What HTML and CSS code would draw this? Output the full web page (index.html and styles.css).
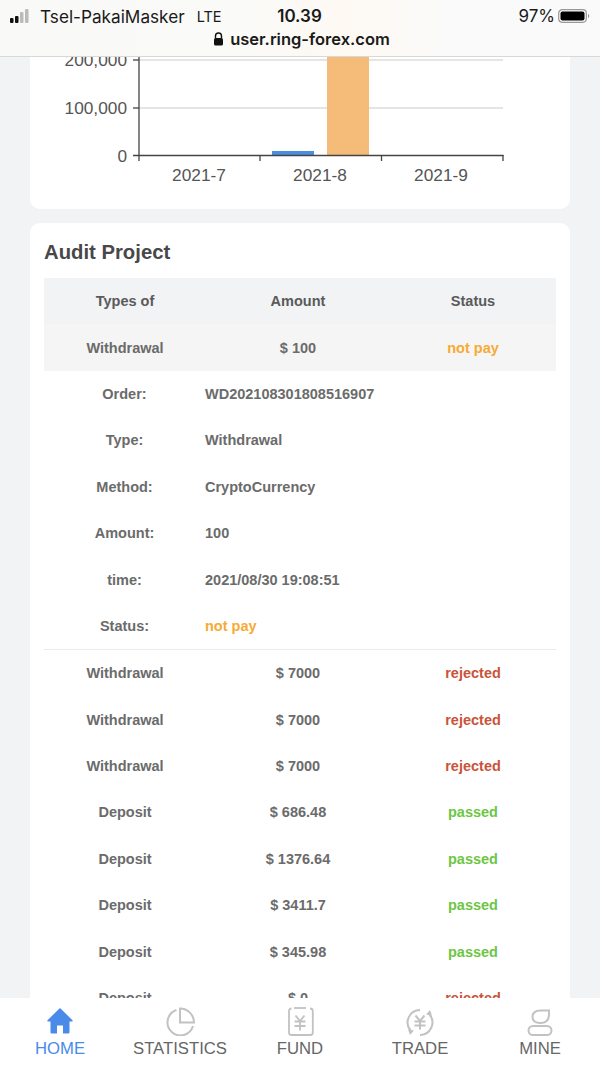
FILE: index.html
```html
<!DOCTYPE html>
<html lang="en">
<head>
<meta charset="utf-8">
<title>Audit Project</title>
<link rel="stylesheet" href="styles.css">
</head>
<body>
<div class="app">
  <header class="browser">
    <div class="status">
      <div class="carrier">
        <svg class="signal" width="24" height="16" viewBox="0 0 24 16"><rect x="1" y="10" width="3.5" height="5" rx="1" fill="#111"/><rect x="6" y="8" width="3.5" height="7" rx="1" fill="#111"/><rect x="11" y="4" width="3.5" height="11" rx="1" fill="#bbb"/><rect x="16" y="1" width="3.5" height="14" rx="1" fill="#bbb"/></svg>
        <span class="carrier-name">Tsel-PakaiMasker</span>
        <span class="net">LTE</span>
      </div>
      <div class="clock">10.39</div>
      <div class="battery">
        <span>97%</span>
        <svg width="32" height="16" viewBox="0 0 32 16"><rect x="0.7" y="1.7" width="27.6" height="12.6" rx="3.5" fill="none" stroke="#999" stroke-width="1.2"/><rect x="2.5" y="3.5" width="24" height="9" rx="2" fill="#000"/><path d="M30 6v4c.8-.3 1.2-1 1.2-2s-.4-1.700-1.200-2z" fill="#999"/></svg>
      </div>
    </div>
    <div class="url">
      <svg width="11" height="14" viewBox="0 0 11 14"><path d="M2.500 6V4a3 3 0 0 1 6 0v2" fill="none" stroke="#111" stroke-width="1.400"/><rect x="1" y="6" width="9" height="7.500" rx="1.500" fill="#111"/></svg>
      <span>user.ring-forex.com</span>
    </div>
  </header>

  <main class="content">
    <section class="card chart-card">
      <svg class="chart" width="540" height="129" viewBox="30 57 540 129">
        <g class="grid"><line x1="139" y1="60" x2="503" y2="60"/><line x1="139" y1="108" x2="503" y2="108"/></g>
        <rect x="272" y="151" width="42" height="4.500" fill="#4a90e2"/>
        <rect x="327" y="50" width="42" height="105.500" fill="#f5bb78"/>
        <g class="axis">
          <line x1="139" y1="50" x2="139" y2="161"/>
          <line x1="133" y1="155.500" x2="503.500" y2="155.500"/>
          <line x1="133" y1="108" x2="139" y2="108"/>
          <line x1="133" y1="60" x2="139" y2="60"/>
          <line x1="260" y1="155" x2="260" y2="161"/>
          <line x1="381.500" y1="155" x2="381.500" y2="161"/>
          <line x1="503" y1="155" x2="503" y2="161"/>
        </g>
        <g class="ylabels">
          <text x="127" y="66">200,000</text>
          <text x="127" y="114">100,000</text>
          <text x="127" y="161.500">0</text>
        </g>
        <g class="xlabels">
          <text x="199" y="181">2021-7</text>
          <text x="320" y="181">2021-8</text>
          <text x="441" y="181">2021-9</text>
        </g>
      </svg>
    </section>

    <section class="card audit">
      <h2 class="title">Audit Project</h2>
      <div class="table">
        <div class="row head"><span>Types of</span><span>Amount</span><span>Status</span></div>
        <div class="row open"><span>Withdrawal</span><span>$ 100</span><span class="s-wait">not pay</span></div>
        <div class="details">
          <div class="detail"><span>Order:</span><span>WD202108301808516907</span></div>
          <div class="detail"><span>Type:</span><span>Withdrawal</span></div>
          <div class="detail"><span>Method:</span><span>CryptoCurrency</span></div>
          <div class="detail"><span>Amount:</span><span>100</span></div>
          <div class="detail"><span>time:</span><span>2021/08/30 19:08:51</span></div>
          <div class="detail"><span>Status:</span><span class="s-wait">not pay</span></div>
        </div>
        <div class="row"><span>Withdrawal</span><span>$ 7000</span><span class="s-bad">rejected</span></div>
        <div class="row"><span>Withdrawal</span><span>$ 7000</span><span class="s-bad">rejected</span></div>
        <div class="row"><span>Withdrawal</span><span>$ 7000</span><span class="s-bad">rejected</span></div>
        <div class="row"><span>Deposit</span><span>$ 686.48</span><span class="s-ok">passed</span></div>
        <div class="row"><span>Deposit</span><span>$ 1376.64</span><span class="s-ok">passed</span></div>
        <div class="row"><span>Deposit</span><span>$ 3411.7</span><span class="s-ok">passed</span></div>
        <div class="row"><span>Deposit</span><span>$ 345.98</span><span class="s-ok">passed</span></div>
        <div class="row"><span>Deposit</span><span>$ 0</span><span class="s-bad">rejected</span></div>
      </div>
    </section>
  </main>

  <nav class="tabs">
    <a class="tab active">
      <svg width="30" height="30" viewBox="0 0 30 30"><path d="M15 2 2.500 14.200c-.6.600-.2 1.300.6 1.300H5.500v10.500c0 1 .7 1.500 1.500 1.500h5v-8h6v8h5c.8 0 1.500-.5 1.500-1.500V15.500h2.400c.8 0 1.200-.7.600-1.300z" fill="#4a8bea"/></svg>
      <span>HOME</span>
    </a>
    <a class="tab">
      <svg width="30" height="30" viewBox="0 0 30 30" fill="none" stroke="#c2c2c2" stroke-width="2"><path d="M11.500 4A13 13 0 1 0 28 20"/><path d="M15 2.500V16.500H29A14 14 0 0 0 15 2.500z"/></svg>
      <span>STATISTICS</span>
    </a>
    <a class="tab">
      <svg width="30" height="30" viewBox="0 0 30 30" fill="none" stroke="#c2c2c2" stroke-width="1.800"><path d="M9 2H21"/><path d="M25 2.500c1.800 0 2.800 1 2.800 2.500V26.500c0 1.500-1 2.500-2.500 2.500H6.500C5 29 4 28 4 26.500V5c0-1.500 1-2.500 2.500-2.500"/><path d="M10.500 9.500 15 15l4.500-5.500M9.500 15.500h11M9.500 20h11M15 15v9.500"/></svg>
      <span>FUND</span>
    </a>
    <a class="tab">
      <svg width="30" height="30" viewBox="0 0 30 30" fill="none" stroke="#c2c2c2" stroke-width="2"><path d="M15 4A12.500 12.500 0 0 0 5.500 24.500"/><path d="M24.500 8.500A12.500 12.500 0 0 1 15 29"/><path d="M10.500 9.500 15 15l4.500-5.500M9.500 15.500h11M9.500 19.500h11M15 15v8.500"/><path d="M3 23.500 9 24.500 5 29zM27 9.500 21 8.500 25 4z" fill="#c2c2c2" stroke="none"/></svg>
      <span>TRADE</span>
    </a>
    <a class="tab">
      <svg width="30" height="30" viewBox="0 0 30 30" fill="none" stroke="#c2c2c2" stroke-width="2"><path d="M15.500 4.500H24V8Q24 17 15.500 17Q7.500 17 7.500 11Q7.500 4.500 15.500 4.500z"/><rect x="3.500" y="20" width="23" height="9" rx="4.500"/></svg>
      <span>MINE</span>
    </a>
  </nav>
</div>
</body>
</html>
```

FILE: styles.css
```css
* { box-sizing: border-box; }
html, body { margin: 0; padding: 0; }
body { background: #f2f3f5; font-family: "Liberation Sans", Arial, sans-serif; color: #666; }
.app { width: 600px; height: 1067px; display: flex; flex-direction: column; overflow: hidden; }

.browser { height: 57px; flex: none; background: linear-gradient(90deg, #f9f9f8 0%, #fafaf8 40%, #fef9f3 58%, #fafafa 75%, #fafafa 100%); border-bottom: 1px solid #d8d8d8; font-family: Inter, "Liberation Sans", sans-serif; color: #1a1a1a; }
.status { height: 30px; padding: 2px 10px 0 9px; display: grid; grid-template-columns: 1fr auto 1fr; align-items: center; font-size: 17.200px; }
.carrier { display: flex; align-items: center; }
.carrier-name { margin-left: 7px; }
.net { margin-left: 12px; font-size: 14.500px; }
.signal { display: block; }
.clock { font-weight: 600; font-size: 17px; }
.battery { display: flex; justify-content: flex-end; align-items: center; gap: 3px; font-size: 17px; }
.battery svg { display: block; }
.url { display: flex; justify-content: center; align-items: center; gap: 6px; font-size: 16.500px; font-weight: 600; margin-top: -1px; padding-left: 3px; }
.url svg { display: block; }

.content { flex: 1; min-height: 0; overflow: hidden; padding: 0 30px; }
.card { background: #fff; border-radius: 10px; }
.chart-card { height: 152px; border-radius: 0 0 10px 10px; }
.chart { display: block; overflow: hidden; }
.grid line { stroke: #dcdcdc; stroke-width: 1.500; }
.axis line { stroke: #444; stroke-width: 1.300; }
.ylabels text, .xlabels text { font-family: "Liberation Sans", Arial, sans-serif; font-size: 17.300px; fill: #555; }
.ylabels text { text-anchor: end; }
.xlabels text { text-anchor: middle; }

.audit { margin-top: 14px; padding: 18px 14px 0; }
.title { margin: 0; font-size: 20.300px; line-height: 23px; font-weight: 700; color: #484848; }
.table { margin-top: 14px; font-size: 14.500px; line-height: 16px; font-weight: 700; color: #6b6b6b; }
.row { display: grid; grid-template-columns: 162px 184px 166px; height: 46.400px; align-items: center; text-align: center; }
.head { background: #f2f3f5; color: #5a5a5a; }
.open { background: #f5f5f5; }
.details { border-bottom: 1.500px solid #ececec; }
.detail { display: grid; grid-template-columns: 161px 1fr; height: 46.400px; align-items: center; }
.detail span:first-child { text-align: center; }
.s-wait { color: #f5ab35; }
.s-bad { color: #c9543a; }
.s-ok { color: #6cc644; }

.tabs { height: 69px; flex: none; background: #fff; display: grid; grid-template-columns: repeat(5, 120px); }
.tab { display: flex; flex-direction: column; align-items: center; padding-top: 8px; font-size: 16.700px; color: #666; }
.tab svg { display: block; }
.tab span { margin-top: 3px; line-height: 20px; }
.active { color: #4a8bea; }
```
